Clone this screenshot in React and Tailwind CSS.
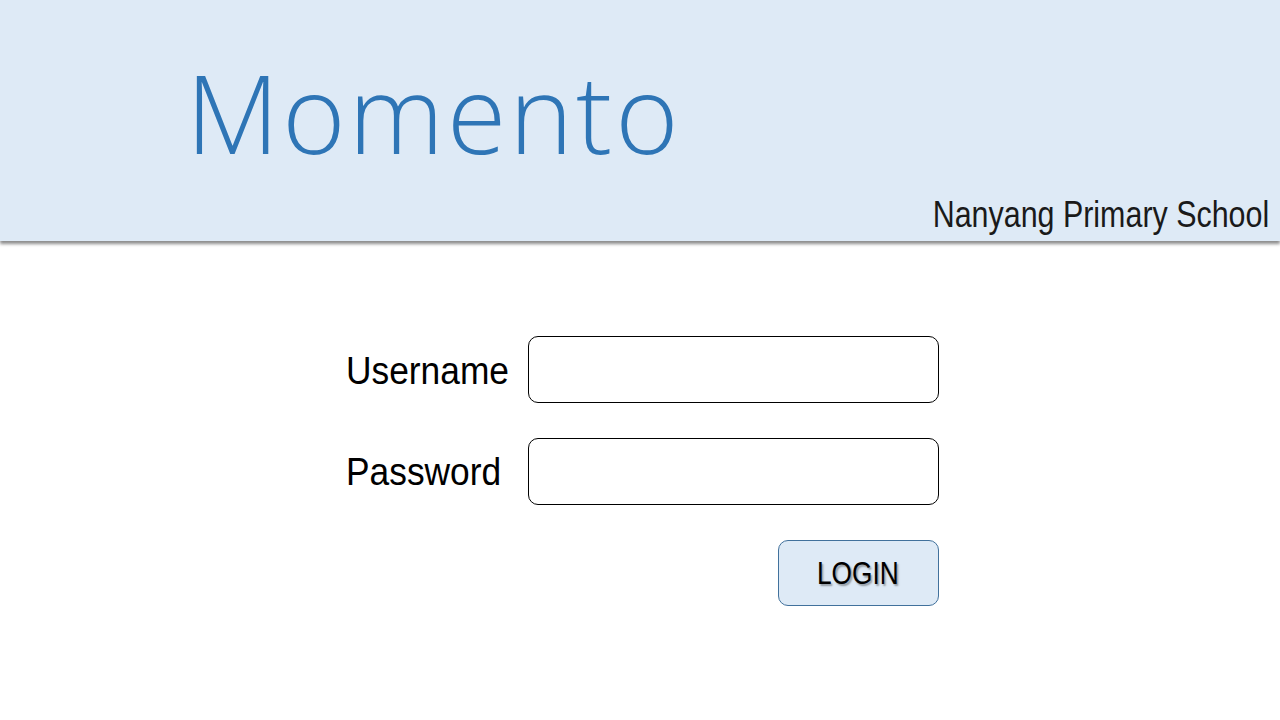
export default function App() {
  const narrow = { fontFamily: '"Liberation Sans", Arial, sans-serif' };

  return (
    <div className="min-h-screen w-full bg-white">
      {/* Header */}
      <header className="relative h-[241px] bg-[#deeaf6] shadow-[0_3px_3px_rgba(0,0,0,0.45)]">
        <div className="pl-[186px] pt-[59px]">
          <h1
            className="text-[108px] leading-none font-light tracking-[3px] text-[#2e75b6]"
            style={{ fontFamily: '"Open Sans", "Noto Sans", sans-serif' }}
          >
            Momento
          </h1>
        </div>
        <div
          className="absolute right-[11px] bottom-[8px] origin-right scale-x-[0.845] whitespace-nowrap text-[36px] leading-none text-[#1a1a1a]"
          style={narrow}
        >
          Nanyang Primary School
        </div>
      </header>

      {/* Login form */}
      <main className="flex justify-center pt-[95px]">
        <div className="flex flex-col gap-[35px] pl-[4px]">
          <div className="flex items-center">
            <label className="w-[182px] shrink-0 pt-[3px]" style={narrow}>
              <span className="block origin-left scale-x-[0.93] text-[38px] leading-none text-black">Username</span>
            </label>
            <input
              type="text"
              className="h-[67px] w-[411px] rounded-[10px] border border-black bg-white px-3 outline-none"
            />
          </div>
          <div className="flex items-center">
            <label className="w-[182px] shrink-0" style={narrow}>
              <span className="block origin-left scale-x-[0.93] text-[38px] leading-none text-black">Password</span>
            </label>
            <input
              type="password"
              className="h-[67px] w-[411px] rounded-[10px] border border-black bg-white px-3 outline-none"
            />
          </div>
          <div className="flex justify-end">
            <button
              className="flex h-[66px] w-[161px] items-center justify-center rounded-[10px] border border-[#41719c] bg-[#deeaf6]"
              style={narrow}
            >
              <span className="inline-block scale-x-[0.82] text-[32px] leading-none text-black [text-shadow:2px_2px_2px_rgba(0,0,0,0.35)]">
                LOGIN
              </span>
            </button>
          </div>
        </div>
      </main>
    </div>
  );
}
